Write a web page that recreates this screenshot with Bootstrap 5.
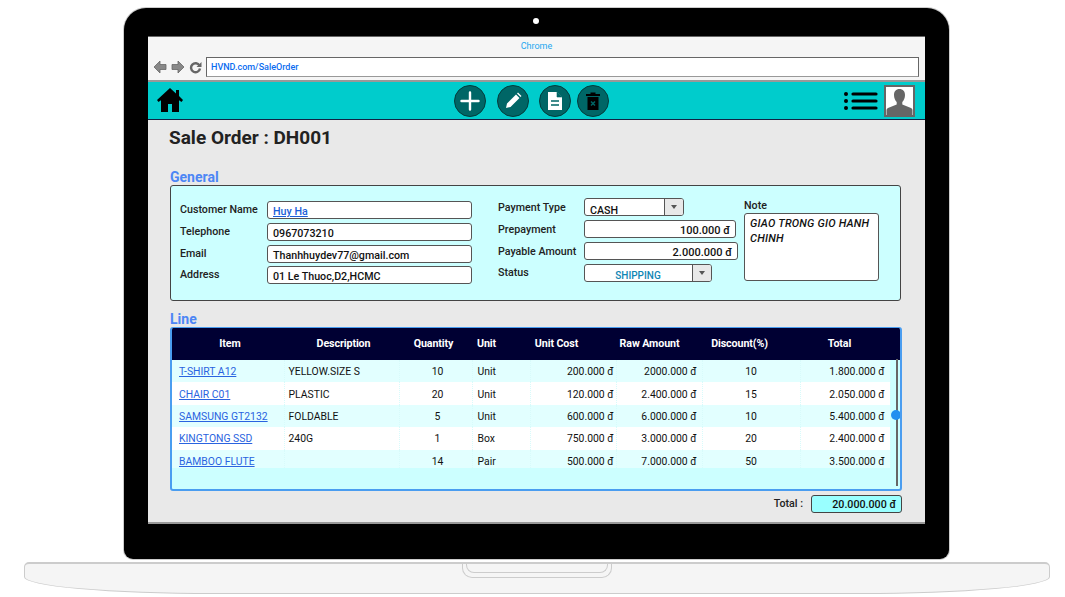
<!DOCTYPE html>
<html lang="en">

<head>
    <meta charset="UTF-8">
    <title>Sale Order</title>
    <link href="https://cdn.jsdelivr.net/npm/bootstrap@5.3.3/dist/css/bootstrap.min.css" rel="stylesheet">
    <style>
        html, body { background: #fff; overflow: hidden; }
        body { font-family: Roboto, "Liberation Sans", sans-serif; font-size: 10.7px; color: #111; height: 597px; }

        /* laptop frame */
        .lid { width: 825px; height: 551px; margin: 8px 0 0 124px; padding: 28px 24px 0; background: #000; border-radius: 22px 22px 9px 9px; box-shadow: 0 0 0 1px #ccc; position: relative; }
        .camera { position: absolute; top: 10px; left: 409px; width: 6px; height: 6px; border-radius: 50%; background: #fff; }
        .screen { width: 777px; height: 488px; background: #e9e9e9; border-top: 1px solid #666; border-bottom: 2px solid #999; }
        .laptop-base { width: 1026px; height: 32px; margin: 3px 0 0 24px; background: #f5f5f5; border: 1px solid #ccc; border-top-width: 2px; border-radius: 5px 5px 190px 190px / 5px 5px 17px 17px; position: relative; }
        .hinge { position: absolute; top: -2px; left: 437px; width: 150px; height: 16px; border: 1px solid #ccc; border-top: 0; border-radius: 0 0 10px 10px; }
        .hinge::after { content: ""; position: absolute; top: 0; left: 3px; right: 3px; height: 11px; border: 1px solid #ccc; border-top: 0; border-radius: 0 0 8px 8px; }

        /* browser chrome */
        .browser-bar { height: 45px; background: #f5f5f5; border-bottom: 2px solid #999; }
        .browser-title { height: 20px; line-height: 18px; font-size: 9px; color: #1ea7f0; text-align: center; }
        .browser-nav { padding: 0 6px 0 5px; gap: 4px; }
        .url-box { width: 713px; height: 20px; line-height: 18px; padding-left: 4px; font-size: 9px; font-weight: 500; color: #0a6cf0; background: #fff; border: 1px solid #666; border-bottom-color: #999; }

        /* toolbar */
        .tool-bar { height: 38px; background: #00cccc; border-bottom: 1px solid #124; padding: 0 10px 0 9px; }
        .home-icon { margin-top: -2px; }
        .round-btn { width: 32px; height: 32px; padding: 0; border-radius: 50%; background: #006666; border: 1px solid #043c3c; }
        .round-group { margin-left: 271px; }
        .gap-edit { margin-left: 11px; }
        .gap-doc { margin-left: 10px; }
        .gap-trash { margin-left: 6px; }
        .avatar-box { width: 31px; height: 32px; margin-left: 6px; border: 2px solid #666; background: #fff; }

        /* page */
        .page-body { padding: 0 22px; }
        .page-title { font-size: 19px; font-weight: 700; line-height: 24px; margin: 6px 0 0 -1px; color: #222; }
        .section-name { font-size: 14px; font-weight: 700; line-height: 16px; color: #4d86f5; }
        .general-name { margin-top: 19px; }
        .general-panel { width: 731px; height: 116px; background: #ccffff; border: 1px solid #444; border-radius: 3px; padding: 12px 9px 0; }
        .field-col-1 { padding-top: 3px; width: 292px; }
        .field-col-2 { margin-left: 26px; width: 246px; }
        .field-col-3 { padding-top: 2px; width: 135px; }
        .field-row { height: 18px; margin-bottom: 4px; }
        .field-col-1 .field-row:nth-child(3) { margin-bottom: 3px; }
        .field-label { width: 87px; font-weight: 500; color: #222; }
        .field-col-2 .field-label { width: 86px; margin-top: 3px; }
        .field-col-2 .field-row:nth-child(4) .field-label { margin-top: 1px; }
        .field-box { height: 18px; padding: 3px 0 0 5px; font-size: 10.7px; line-height: 14px; font-weight: 500; color: #111; border: 1px solid #555; border-radius: 3px; background: #fff; min-height: 0; white-space: nowrap; overflow: hidden; }
        .field-box a { color: #1a5fd8; }
        .w-name { width: 205px; }
        .w-prepay { width: 152px; padding: 3px 5px 0 0; text-align: right; font-size: 11px; }
        .w-payable { width: 154px; padding: 3px 5px 0 0; text-align: right; font-size: 11px; }
        .combo-cash { width: 100px; }
        .combo-status { width: 128px; }
        .combo-text { flex: 1; padding-top: 2px; }
        .combo-status .combo-text { text-align: center; color: #0f86b4; font-size: 10px; padding-right: 6px; padding-top: 1px; }
        .combo-arrow { width: 19px; height: 18px; margin-top: -4px; background: #e8e8e8; border-left: 1px solid #555; }
        .combo-arrow::after { content: ""; display: block; margin: 7px auto 0; width: 0; border: 3.5px solid transparent; border-top: 4px solid #555; border-bottom: 0; }
        .note-label { font-weight: 500; color: #222; line-height: 12px; margin-bottom: 1px; }
        .note-box { height: 68px; padding: 3px 6px 3px 5px; font-size: 11px; line-height: 14.5px; font-style: italic; font-weight: 500; color: #111; background: #fff; border: 1px solid #555; border-radius: 3px; letter-spacing: .2px; }

        /* lines */
        .line-name { margin-top: 10px; }
        .line-frame { width: 732px; height: 164px; background: #ccffff; border: 2px solid #4a9df0; border-top-width: 1px; border-radius: 3px; position: relative; overflow: hidden; }
        .line-table { table-layout: fixed; width: 728px; margin: 0; font-size: 10.4px; --bs-table-bg: transparent; }
        .line-table th { height: 32px; padding: 0; background: #000033; color: #fff; font-weight: 700; font-size: 10.7px; text-align: center; vertical-align: middle; border: 0; box-shadow: none; letter-spacing: -.1px; }
        .line-table th:nth-child(1), .line-table th:nth-child(2) { padding-left: 4px; }
        .line-table th:nth-child(3) { padding-right: 4px; }
        .line-table th:nth-child(4) { text-align: left; padding-left: 5px; }
        .line-table th:nth-child(5) { padding-right: 33px; }
        .line-table th:nth-child(6) { padding-right: 19px; }
        .line-table th:nth-child(7) { padding-right: 23px; }
        .line-table th:nth-child(8) { padding-right: 11px; }
        .line-table td { height: 22.4px; line-height: 14px; padding: 2px 5px 0; border: 0; color: #111; vertical-align: middle; white-space: nowrap; border-right: 1px dotted #d8fbfb; }
        .line-table td:first-child { padding-left: 7px; }
        .line-table td:nth-child(2) { padding-left: 4px; }
        .line-table td:nth-child(3) { padding-left: 9px; }
        .line-table td:nth-child(5) { padding-right: 2px; }
        .line-table tr:nth-child(odd) td { background: #e2ffff; }
        .line-table tr:nth-child(even) td { background: #fff; }
        .line-table tr td.gutter, .line-table tr:nth-child(n) td.gutter { background: #ccffff; border: 0; }
        .line-table tr.last-line td { height: 18px; padding-top: 5px; line-height: 13px; }
        .line-table a { color: #2a63e0; }
        .scroll-track { position: absolute; top: 31px; right: 2px; width: 2px; height: 127px; background: #666; }
        .scroll-thumb { position: absolute; top: 51px; left: -5px; width: 10px; height: 10px; border-radius: 50%; background: #2090f0; }
        .sum-row { margin-top: 4px; width: 732px; }
        .sum-label { font-weight: 500; color: #222; margin-right: 8px; }
        .sum-box { width: 91px; height: 18px; line-height: 17px; padding-right: 5px; text-align: right; font-size: 10.7px; font-weight: 500; background: #99ffff; border: 1px solid #444; border-radius: 3px; }
    </style>
</head>

<body>
    <div class="lid">
        <div class="camera"></div>
        <div class="screen">
            <div class="browser-bar">
                <div class="browser-title">Chrome</div>
                <div class="browser-nav d-flex align-items-center">
                    <svg width="14" height="14" viewBox="0 0 14 14"><path d="M7 1 1 7l6 6V9.500h6v-5H7z" fill="#888" stroke="#666" stroke-width=".8"/></svg>
                    <svg width="14" height="14" viewBox="0 0 14 14"><path d="m7 1 6 6-6 6V9.500H1v-5h6z" fill="#888" stroke="#666" stroke-width=".8"/></svg>
                    <svg width="13" height="13" viewBox="0 0 13 13"><path d="M10.500 4.500A4.500 4.500 0 1 0 11 7.500" fill="none" stroke="#666" stroke-width="2.400"/><path d="M12.500 1v5h-5z" fill="#666"/></svg>
                    <div class="url-box">HVND.com/SaleOrder</div>
                </div>
            </div>

            <div class="tool-bar d-flex align-items-center">
                <svg class="home-icon" width="26" height="24" viewBox="0 0 26 24"><path d="M13 0 0 12l1.500 2L4 12.300V24h7v-8h4v8h7V12.300l2.500 1.700 1.500-2-4-4V2h-3v3.500z" fill="#000"/></svg>
                <div class="round-group d-flex">
                    <button type="button" class="btn round-btn d-flex align-items-center justify-content-center">
                        <svg width="20" height="20" viewBox="0 0 20 20"><path d="M10 1.500v17M1.500 10h17" stroke="#fff" stroke-width="2.400" stroke-linecap="round"/></svg>
                    </button>
                    <button type="button" class="btn round-btn d-flex align-items-center justify-content-center gap-edit">
                        <svg width="17" height="17" viewBox="0 0 17 17"><path d="M1 16l1-4.500L11 2.500 14.500 6l-9 9zM12 1.500l1-1 3.500 3.500-1 1z" fill="#fff"/></svg>
                    </button>
                    <button type="button" class="btn round-btn d-flex align-items-center justify-content-center gap-doc">
                        <svg width="14" height="18" viewBox="0 0 14 18"><path d="M0 0h9l5 5v13H0z" fill="#fff"/><path d="M9 0v5h5z" fill="#006666" stroke="#006666" stroke-width=".6"/><path d="M3 9h8M3 13h8" stroke="#006666" stroke-width="1.600"/></svg>
                    </button>
                    <button type="button" class="btn round-btn d-flex align-items-center justify-content-center gap-trash">
                        <svg width="14" height="18" viewBox="0 0 14 18"><path d="M0 2h4.500V0.500h5V2H14v2H0zM1.500 5h11v13h-11z" fill="#000"/><path d="m5 9.500 4 4m0-4-4 4" stroke="#006666" stroke-width="1.500"/></svg>
                    </button>
                </div>
                <div class="ms-auto d-flex align-items-center">
                    <svg width="34" height="20" viewBox="0 0 34 20"><path d="M9 3h23M9 10h23M9 17h23" stroke="#000" stroke-width="3.200" stroke-linecap="round"/><circle cx="2" cy="3" r="2" fill="#000"/><circle cx="2" cy="10" r="2" fill="#000"/><circle cx="2" cy="17" r="2" fill="#000"/></svg>
                    <div class="avatar-box">
                        <svg class="d-block" width="27" height="28" viewBox="0 0 27 28"><path d="M13.500 2c3.500 0 5.500 2.500 5.500 6 0 3-1.200 5.500-2.700 7v2.500L25 21c1 .5 1.500 1.500 1.500 2.500V28H.5v-4.500c0-1 .5-2 1.500-2.500l8.700-3.500V15C9.200 13.500 8 11 8 8c0-3.500 2-6 5.500-6z" fill="#666"/></svg>
                    </div>
                </div>
            </div>

            <div class="page-body">
                <h1 class="page-title">Sale Order : DH001</h1>

                <div class="section-name general-name">General</div>
                <div class="general-panel d-flex align-items-start">
                    <div class="field-col-1">
                        <div class="field-row d-flex align-items-center"><span class="field-label">Customer Name</span><div class="field-box w-name"><a href="#">Huy Ha</a></div></div>
                        <div class="field-row d-flex align-items-center"><span class="field-label">Telephone</span><div class="field-box w-name">0967073210</div></div>
                        <div class="field-row d-flex align-items-center"><span class="field-label">Email</span><div class="field-box w-name">Thanhhuydev77@gmail.com</div></div>
                        <div class="field-row d-flex align-items-center"><span class="field-label">Address</span><div class="field-box w-name">01 Le Thuoc,D2,HCMC</div></div>
                    </div>
                    <div class="field-col-2">
                        <div class="field-row d-flex align-items-center"><span class="field-label">Payment Type</span><div class="field-box combo-cash d-flex"><span class="combo-text">CASH</span><span class="combo-arrow"></span></div></div>
                        <div class="field-row d-flex align-items-center"><span class="field-label">Prepayment</span><div class="field-box w-prepay">100.000 đ</div></div>
                        <div class="field-row d-flex align-items-center"><span class="field-label">Payable Amount</span><div class="field-box w-payable">2.000.000 đ</div></div>
                        <div class="field-row d-flex align-items-center"><span class="field-label">Status</span><div class="field-box combo-status d-flex"><span class="combo-text">SHIPPING</span><span class="combo-arrow"></span></div></div>
                    </div>
                    <div class="field-col-3">
                        <div class="note-label">Note</div>
                        <div class="note-box">GIAO TRONG GIO HANH CHINH</div>
                    </div>
                </div>

                <div class="section-name line-name">Line</div>
                <div class="line-frame">
                    <table class="table line-table">
                        <colgroup>
                            <col style="width:112px"><col style="width:115px"><col style="width:73px"><col style="width:58px"><col style="width:86px"><col style="width:86px"><col style="width:98px"><col style="width:90px"><col style="width:10px">
                        </colgroup>
                        <thead>
                            <tr><th>Item</th><th>Description</th><th>Quantity</th><th>Unit</th><th>Unit Cost</th><th>Raw Amount</th><th>Discount(%)</th><th>Total</th><th></th></tr>
                        </thead>
                        <tbody>
                            <tr><td><a href="#">T-SHIRT A12</a></td><td>YELLOW.SIZE S</td><td class="text-center">10</td><td>Unit</td><td class="text-end">200.000 đ</td><td class="text-end">2000.000 đ</td><td class="text-center">10</td><td class="text-end">1.800.000 đ</td><td class="gutter"></td></tr>
                            <tr><td><a href="#">CHAIR C01</a></td><td>PLASTIC</td><td class="text-center">20</td><td>Unit</td><td class="text-end">120.000 đ</td><td class="text-end">2.400.000 đ</td><td class="text-center">15</td><td class="text-end">2.050.000 đ</td><td class="gutter"></td></tr>
                            <tr><td><a href="#">SAMSUNG GT2132</a></td><td>FOLDABLE</td><td class="text-center">5</td><td>Unit</td><td class="text-end">600.000 đ</td><td class="text-end">6.000.000 đ</td><td class="text-center">10</td><td class="text-end">5.400.000 đ</td><td class="gutter"></td></tr>
                            <tr><td><a href="#">KINGTONG SSD</a></td><td>240G</td><td class="text-center">1</td><td>Box</td><td class="text-end">750.000 đ</td><td class="text-end">3.000.000 đ</td><td class="text-center">20</td><td class="text-end">2.400.000 đ</td><td class="gutter"></td></tr>
                            <tr class="last-line"><td><a href="#">BAMBOO FLUTE</a></td><td></td><td class="text-center">14</td><td>Pair</td><td class="text-end">500.000 đ</td><td class="text-end">7.000.000 đ</td><td class="text-center">50</td><td class="text-end">3.500.000 đ</td><td class="gutter"></td></tr>
                        </tbody>
                    </table>
                    <div class="scroll-track"><div class="scroll-thumb"></div></div>
                </div>
                <div class="sum-row d-flex justify-content-end align-items-center">
                    <span class="sum-label">Total :</span>
                    <div class="sum-box">20.000.000 đ</div>
                </div>
            </div>
        </div>
    </div>
    <div class="laptop-base"><div class="hinge"></div></div>

    <script src="https://cdn.jsdelivr.net/npm/bootstrap@5.3.3/dist/js/bootstrap.bundle.min.js"></script>
</body>

</html>
